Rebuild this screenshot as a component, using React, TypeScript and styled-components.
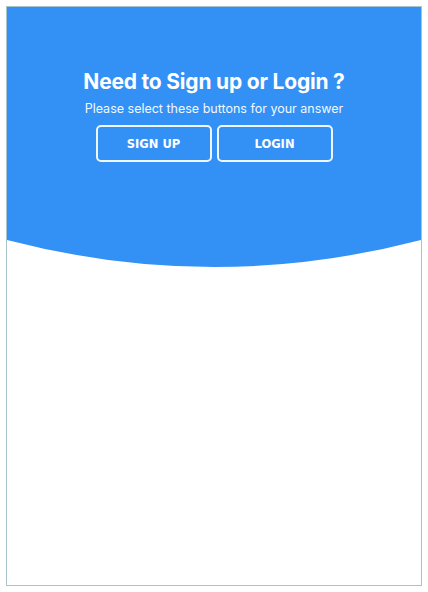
import styled, { createGlobalStyle } from "styled-components";

const GlobalStyle = createGlobalStyle`
  html, body {
    margin: 0;
    padding: 0;
    background: #ffffff;
  }
`;

const Card = styled.div`
  width: 416px;
  height: 580px;
  margin: 6px;
  box-sizing: border-box;
  border: 1px solid #a9c3cc;
  overflow: hidden;
  background: #ffffff;
`;

const Hero = styled.div`
  background-color: #3391f6;
  height: 233px;
  display: flex;
  flex-direction: column;
  align-items: center;
  padding-top: 62px;
  box-sizing: border-box;
`;

const Wave = styled.svg`
  display: block;
  width: 100%;
  height: 27px;
`;

const Title = styled.h1`
  margin: 0;
  color: #ffffff;
  font-family: "Inter", "Open Sans", sans-serif;
  font-weight: 700;
  font-size: 21px;
  letter-spacing: -0.2px;
  line-height: 26px;
`;

const Subtitle = styled.p`
  margin: 6px 0 0;
  color: #f2f8ff;
  font-family: "Inter", "Open Sans", sans-serif;
  font-weight: 400;
  font-size: 12.5px;
  line-height: 16px;
`;

const ButtonRow = styled.div`
  display: flex;
  gap: 5px;
  margin-top: 8px;
`;

const OutlineButton = styled.button`
  width: 116px;
  height: 37px;
  box-sizing: border-box;
  border: 2px solid #eef6ff;
  border-radius: 5px;
  background: transparent;
  color: #ffffff;
  font-family: "DejaVu Sans", "Liberation Sans", sans-serif;
  font-weight: bold;
  font-size: 11.5px;
  cursor: pointer;
`;

const App = () => {
  return (
    <>
      <GlobalStyle />
      <Card>
        <Hero>
          <Title>Need to Sign up or Login ?</Title>
          <Subtitle>Please select these buttons for your answer</Subtitle>
          <ButtonRow>
            <OutlineButton>SIGN UP</OutlineButton>
            <OutlineButton>LOGIN</OutlineButton>
          </ButtonRow>
        </Hero>
        <Wave viewBox="0 0 414 27" preserveAspectRatio="none">
          <path d="M0 0 H414 V0 Q207 54 0 0 Z" fill="#3391f6" />
        </Wave>
      </Card>
    </>
  );
};

export default App;
